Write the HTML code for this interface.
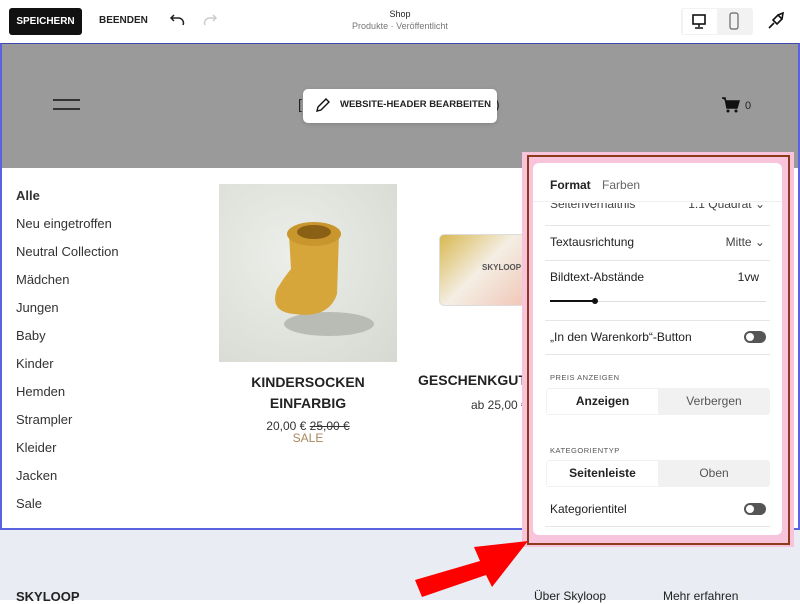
<!DOCTYPE html>
<html><head><meta charset="utf-8"><style>
*{margin:0;padding:0;box-sizing:border-box}
body{width:800px;height:600px;overflow:hidden;position:relative;background:#fff;font-family:"Liberation Sans",sans-serif;color:#222}
.a{position:absolute}
.top{left:0;top:0;width:800px;height:43px;background:#fff}
.btn{left:9px;top:8px;width:73px;height:27px;background:#111;color:#fff;border-radius:3px;font-size:10px;font-weight:bold;text-align:center;line-height:27px}
.hdr{left:1px;top:44px;width:797px;height:124px;background:#9a9a9a}
.frame{left:0;top:43px;width:800px;height:487px;border:2px solid #5a64e0;border-top:1px solid #3a48b0}
.cat{left:16px;font-size:13px;color:#333}
.foot{left:0;top:530px;width:800px;height:70px;background:#e9ecf2}
.panel{left:533px;top:163px;width:249px;height:372px;background:#fff;border-radius:6px;overflow:hidden}
.row{position:absolute;left:17px;right:17px;font-size:12px;color:#222}
.line{position:absolute;left:12px;right:12px;height:1px;background:#e5e5e5}
.tog{position:absolute;right:16px;width:22px;height:12px;border-radius:6px;background:#555}
.tog:after{content:"";position:absolute;left:2px;top:2px;width:8px;height:8px;border-radius:50%;background:#fff}
.seg{position:absolute;left:13px;width:224px;height:27px;background:#f1f1f1;border-radius:3px;font-size:12px}
.seg div{position:absolute;top:0;height:27px;line-height:27px;text-align:center;width:112px}
.lab{position:absolute;left:17px;font-size:7.5px;letter-spacing:.5px;color:#555}
</style></head><body>
<div class="a top"></div>
<div class="a btn">SPEICHERN</div>
<div class="a" style="left:99px;top:15px;font-size:10px;font-weight:bold">BEENDEN</div>
<svg class="a" style="left:168px;top:12px" width="50" height="18"><path d="M15 13 A5 5 0 0 0 10 6 H3 M6 3 L3 6 L6 9" fill="none" stroke="#222" stroke-width="1.5"/><path d="M37 13 A5 5 0 0 1 42 6 H48 M45 3 L48 6 L45 9" fill="none" stroke="#ccc" stroke-width="1.5"/></svg>
<div class="a" style="left:300px;top:9px;width:200px;text-align:center;font-size:9px">Shop</div>
<div class="a" style="left:300px;top:21px;width:200px;text-align:center;font-size:9px;color:#777">Produkte · Veröffentlicht</div>
<div class="a" style="left:681px;top:8px;width:72px;height:27px;background:#f2f2f2;border-radius:3px"></div>
<div class="a" style="left:683px;top:9px;width:34px;height:25px;background:#fff"></div>
<svg class="a" style="left:690px;top:12px" width="60" height="20"><rect x="3" y="3" width="12" height="9" fill="none" stroke="#111" stroke-width="1.6"/><path d="M9 12v3M5 16h8" stroke="#111" stroke-width="1.5"/><rect x="40" y="1" width="8" height="16" rx="2" fill="none" stroke="#666" stroke-width="1.2"/></svg>
<svg class="a" style="left:766px;top:11px" width="20" height="20"><path d="M3 17 L8 12 M7 9 L11 13 L16 8 L12 4 Z M12 4 L17 2 L16 8" fill="none" stroke="#111" stroke-width="1.6"/></svg>
<div class="a hdr"></div>
<div class="a" style="left:53px;top:99px;width:27px;height:1.5px;background:#333"></div>
<div class="a" style="left:53px;top:108px;width:27px;height:1.5px;background:#333"></div>
<div class="a" style="left:298px;top:96px;font-size:14px">[</div>
<div class="a" style="left:495px;top:96px;font-size:14px">)</div>
<div class="a" style="left:303px;top:89px;width:194px;height:34px;background:#fff;border-radius:5px;box-shadow:0 1px 4px rgba(0,0,0,.15)"></div>
<svg class="a" style="left:315px;top:97px" width="16" height="16"><path d="M2 14 L3 10 L11 2 L14 5 L6 13 Z" fill="none" stroke="#111" stroke-width="1.4"/></svg>
<div class="a" style="left:340px;top:99px;font-size:9.5px;font-weight:bold">WEBSITE-HEADER BEARBEITEN</div>
<svg class="a" style="left:721px;top:96px" width="20" height="18"><path d="M1 2h3l2 10h10l2-7H5" fill="#111" stroke="#111" stroke-width="1.5"/><circle cx="7" cy="15" r="1.5" fill="#111"/><circle cx="15" cy="15" r="1.5" fill="#111"/></svg>
<div class="a" style="left:745px;top:100px;font-size:11px;color:#222">0</div>
<div class="a frame"></div>
<div class="a cat" style="top:188px;font-weight:bold">Alle</div>
<div class="a cat" style="top:216px">Neu eingetroffen</div>
<div class="a cat" style="top:244px">Neutral Collection</div>
<div class="a cat" style="top:272px">Mädchen</div>
<div class="a cat" style="top:300px">Jungen</div>
<div class="a cat" style="top:328px">Baby</div>
<div class="a cat" style="top:356px">Kinder</div>
<div class="a cat" style="top:384px">Hemden</div>
<div class="a cat" style="top:412px">Strampler</div>
<div class="a cat" style="top:440px">Kleider</div>
<div class="a cat" style="top:468px">Jacken</div>
<div class="a cat" style="top:496px">Sale</div>
<div class="a" style="left:219px;top:184px;width:178px;height:178px;background:radial-gradient(circle at 40% 40%,#eceee9,#d6d9d2)"></div>
<svg class="a" style="left:219px;top:184px" width="178" height="178"><ellipse cx="110" cy="140" rx="45" ry="12" fill="#b9bcb5"/><path d="M70 50 L120 50 L118 110 Q110 135 75 130 Q50 128 58 105 Q66 92 72 85 Z" fill="#d6a63a"/><ellipse cx="95" cy="50" rx="27" ry="12" fill="#c8962c"/><ellipse cx="95" cy="48" rx="17" ry="7" fill="#8a6014"/></svg>
<div class="a" style="left:219px;top:372px;width:178px;text-align:center;font-size:14px;font-weight:bold;line-height:21px;color:#222">KINDERSOCKEN<br>EINFARBIG</div>
<div class="a" style="left:219px;top:419px;width:178px;text-align:center;font-size:12px;color:#333">20,00 € <s>25,00 €</s></div>
<div class="a" style="left:219px;top:431px;width:178px;text-align:center;font-size:12px;color:#a88760">SALE</div>
<div class="a" style="left:439px;top:234px;width:100px;height:72px;border-radius:5px;background:linear-gradient(135deg,#d8b850 0%,#f4eee4 45%,#f0c0b0 100%);border:1px solid #ddd"></div>
<div class="a" style="left:482px;top:263px;font-size:8px;font-weight:bold;color:#555">SKYLOOP</div>
<div class="a" style="left:418px;top:372px;font-size:14px;font-weight:bold;color:#222;white-space:nowrap">GESCHENKGUTS</div>
<div class="a" style="left:471px;top:398px;font-size:12px;color:#333">ab 25,00 €</div>
<div class="a foot"></div>
<div class="a" style="left:16px;top:589px;font-size:13px;font-weight:bold">SKYLOOP</div>
<div class="a" style="left:534px;top:589px;font-size:12px">Über Skyloop</div>
<div class="a" style="left:663px;top:589px;font-size:12px">Mehr erfahren</div>
<div class="a" style="left:522px;top:152px;width:272px;height:395px;background:#f7c4dc"></div>
<div class="a" style="left:527px;top:155px;width:263px;height:390px;border:2px solid #8b3a1a"></div>
<svg class="a" style="left:410px;top:535px" width="125" height="65"><path d="M5 45 L70 26 L64 12 L118 6 L82 52 L76 40 L12 62 Z" fill="#f00"/></svg>
<div class="a panel">
<div class="row" style="top:15px;font-size:12px"><b>Format</b> <span style="color:#666;margin-left:8px">Farben</span></div>
<div class="line" style="top:38px;left:0;right:0;background:#eee"></div>
<div class="row" style="top:40px;height:9px;overflow:hidden;color:#444"><div style="margin-top:-6px">Seitenverhältnis<span style="float:right">1:1 Quadrat ⌄</span></div></div>
<div class="line" style="top:62px"></div>
<div class="row" style="top:72px">Textausrichtung<span style="float:right;color:#444">Mitte ⌄</span></div>
<div class="line" style="top:97px"></div>
<div class="row" style="top:107px">Bildtext-Abstände<span style="float:right;margin-right:6px">1vw</span></div>
<div class="a" style="left:17px;top:138px;width:216px;height:1px;background:#ddd"></div>
<div class="a" style="left:17px;top:137px;width:45px;height:2px;background:#111"></div>
<div class="a" style="left:59px;top:135px;width:6px;height:6px;border-radius:50%;background:#111"></div>
<div class="line" style="top:157px"></div>
<div class="row" style="top:167px">„In den Warenkorb“-Button</div>
<div class="tog" style="top:168px"></div>
<div class="line" style="top:191px"></div>
<div class="lab" style="top:210px">PREIS ANZEIGEN</div>
<div class="seg" style="top:225px"><div style="left:1px;top:1px;height:25px;line-height:25px;background:#fff;font-weight:bold;width:111px">Anzeigen</div><div style="left:112px;color:#555">Verbergen</div></div>
<div class="lab" style="top:283px">KATEGORIENTYP</div>
<div class="seg" style="top:297px"><div style="left:1px;top:1px;height:25px;line-height:25px;background:#fff;font-weight:bold;width:111px">Seitenleiste</div><div style="left:112px;color:#555">Oben</div></div>
<div class="row" style="top:339px">Kategorientitel</div>
<div class="tog" style="top:340px"></div>
<div class="line" style="top:363px"></div>
</div>
</body></html>
